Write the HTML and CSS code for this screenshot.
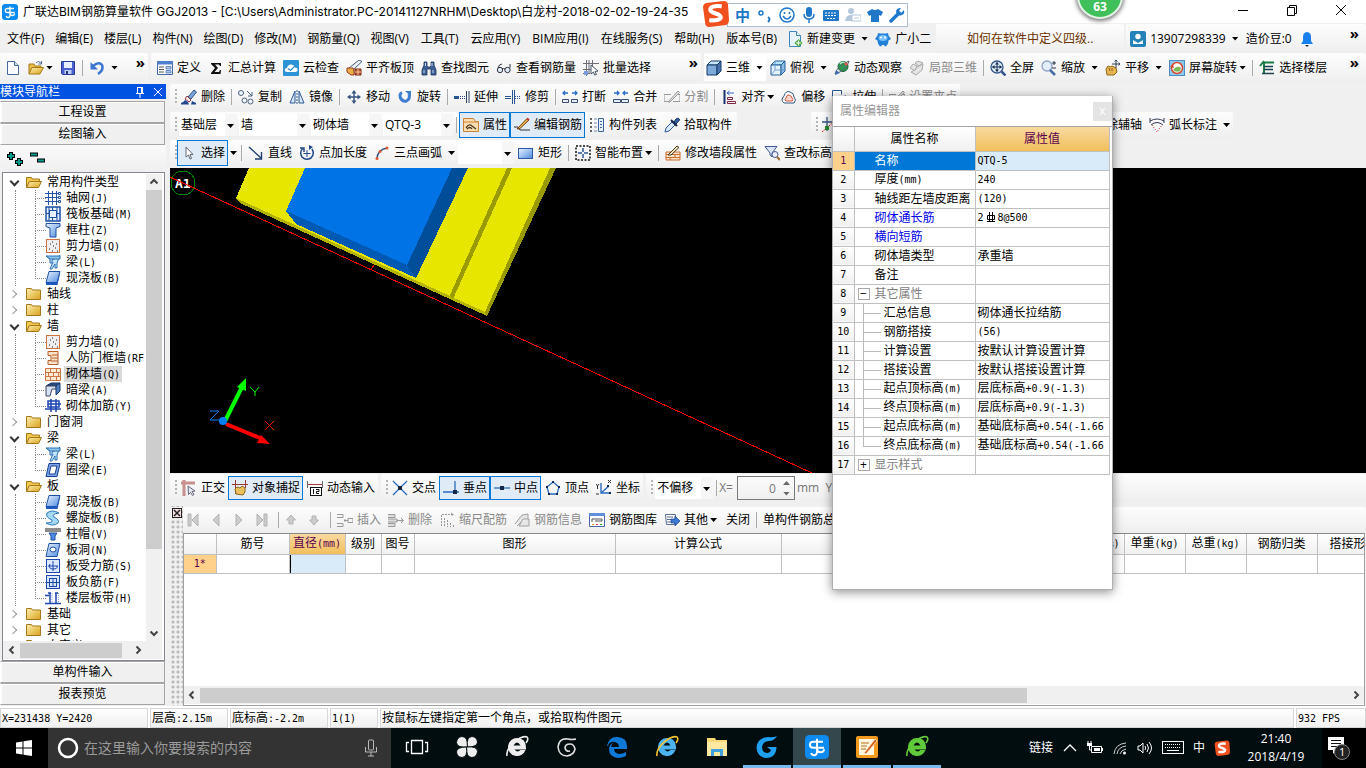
FILE: index.html
```html
<!DOCTYPE html>
<html lang="zh">
<head>
    <meta charset="UTF-8">
    <meta name="viewport" content="width=device-width, initial-scale=1.0">
    <title>广联达BIM钢筋算量软件 GGJ2013</title>
    <link rel="stylesheet" href="styles.css">
</head>
<body>
    <!-- 图标库 -->
    <svg class="sprite" aria-hidden="true">
        <defs>
            <linearGradient id="g-blue" x1="0" y1="0" x2="1" y2="1"><stop offset="0" stop-color="#eaf4ff"/><stop offset="1" stop-color="#4f8be0"/></linearGradient>
            <linearGradient id="g-gold" x1="0" y1="0" x2="1" y2="1"><stop offset="0" stop-color="#fff0b0"/><stop offset="1" stop-color="#d9a21c"/></linearGradient>
        </defs>
        <symbol id="app" viewBox="0 0 16 16"><rect width="16" height="16" rx="3" fill="#0d8bf0"/><path d="M8 2.500V11q0 2.500-2 2.500-1.500 0-1.800-1.500M12 4.500H5.500q-2.200 0-2.200 2t2.200 2h7.200M8 8.500q0 3 2.500 3 2 0 2.200-2" fill="none" stroke="#fff" stroke-width="1.300"/></symbol>
        <symbol id="new" viewBox="0 0 16 16"><path d="M2.500 1.500h7l4 4v9h-11z" fill="#fff" stroke="#456a9a"/><path d="M9.500 1.500v4h4" fill="#cfe0f4" stroke="#456a9a"/></symbol>
        <symbol id="open" viewBox="0 0 16 16"><path d="M1 14V4h5l1 2h6v2" fill="#e9bd4a" stroke="#a87b18"/><path d="M1 14l3-6.500h11.500L12 14z" fill="url(#g-gold)" stroke="#a87b18"/><path d="M8 3q3-3 5 .5M13.500 1v3h-3" fill="none" stroke="#506a90"/></symbol>
        <symbol id="save" viewBox="0 0 16 16"><path d="M1.500 1.500h13v13h-12l-1-1z" fill="#4a62d0" stroke="#2b3c98"/><path d="M4 2h8v6H4z" fill="#e8eefc"/><path d="M4.500 10h7v4h-7z" fill="#c2cdf2"/><path d="M6 11h2v3H6z" fill="#24357f"/></symbol>
        <symbol id="undo" viewBox="0 0 16 16"><path d="M4 6q6-5 9-1 2 5-4 9" fill="none" stroke="#3c76d0" stroke-width="2.500"/><path d="M1.500 2v7.500H9z" fill="#3c76d0"/></symbol>
        <symbol id="define" viewBox="0 0 16 16"><path d="M.5 1.500h15v13H.5z" fill="#fff" stroke="#4468a8"/><path d="M0 1h16v3.500H0z" fill="#4e7fd0"/><path d="M2 7h5M2 9.500h5M2 12h5" stroke="#555"/><path d="M9 6.500h5v2.500H9zM9 10.500h5v2.500H9z" fill="#a9c4f0" stroke="#4468a8" stroke-width=".7"/></symbol>
        <symbol id="sum" viewBox="0 0 16 16"><path d="M3 3h10v3h-1l-1-1.500H7L10 8l-3.500 4H11l1-2h1l-.5 4H3v-1l4-5-4-4z" fill="#111"/></symbol>
        <symbol id="cloud" viewBox="0 0 16 16"><rect width="16" height="16" rx="1" fill="#2c93d6"/><path d="M4 12q-3-.5-2-3 1-1.500 2-1 1-4 4.500-3.500Q11.500 5 12 7.500q3 0 2.500 3Q14 12 12 12z" fill="#fff"/><path d="M5 8.500l2.500 2L12 6" fill="none" stroke="#2c93d6" stroke-width="1.300"/></symbol>
        <symbol id="flat" viewBox="0 0 16 16"><path d="M3 8L13 0l3 1.500L7 10z" fill="#e8eef8" stroke="#4b5a78"/><path d="M1 8h6l1 3v4H5L1 12z" fill="#e9b04a" stroke="#9a3a16"/><path d="M9 9h6v6H9z" fill="#b8532c" stroke="#7c2b12"/><path d="M9 12h6M12 9v6" stroke="#ffe0c0" stroke-width=".8"/></symbol>
        <symbol id="find" viewBox="0 0 16 16"><path d="M3 2h3v4l1 1h2l1-1V2h3v3l2 5v5h-5V9H6v6H1v-5l2-5z" fill="#3c5f96" stroke="#1e355c" stroke-width=".8"/><path d="M3 10v3M12 10v3M4.500 3v3M11 3v3" stroke="#c5d8f4"/></symbol>
        <symbol id="glass" viewBox="0 0 16 16"><circle cx="4" cy="10" r="2.700" fill="#dfe8f4" stroke="#334"/><circle cx="11.500" cy="10" r="2.700" fill="#dfe8f4" stroke="#334"/><path d="M6 9q1.500-1 3 0M2 8q1-4 4-4M14 8V4" fill="none" stroke="#334"/></symbol>
        <symbol id="batch" viewBox="0 0 16 16"><path d="M3.500 0v16M9.500 0v9M0 3.500h16M0 9.500h9M0 13.500h7M6 0v14" stroke="#6d6d78" fill="none"/><path d="M1 11h4v4H1z" fill="#7c9ae0"/><path d="M8 5l7 6-3 .5 1.500 3-2 .5-1-3-2.500 2z" fill="#fff" stroke="#456"/></symbol>
        <symbol id="cube" viewBox="0 0 16 16"><path d="M1 5l4-4h10l-4 4z" fill="#c8e2f8" stroke="#143a66"/><path d="M1 5h10v10H1z" fill="#7eaadb" stroke="#143a66"/><path d="M11 5l4-4v10l-4 4z" fill="#4672ad" stroke="#143a66"/></symbol>
        <symbol id="cube2" viewBox="0 0 16 16"><path d="M1 5l4-4h10l-4 4z" fill="#b9e3fb" stroke="#245c96"/><path d="M1 5h10v10H1z" fill="#e4f2fd" stroke="#245c96"/><path d="M11 5l4-4v10l-4 4z" fill="#8ebee8" stroke="#245c96"/><path d="M5 1v9l-4 5M5 10h10" fill="none" stroke="#5f8fc2" stroke-width=".8"/></symbol>
        <symbol id="orbit" viewBox="0 0 16 16"><circle cx="9" cy="6.500" r="5" fill="#2b9a52" stroke="#145c30"/><path d="M6 4q2-3 5-1" stroke="#b8efc8" fill="none" stroke-width="1.500"/><path d="M1 14Q3 6 15 1 13 10 1 14z" fill="none" stroke="#56606c"/><path d="M1 15l1-5 4 3z" fill="#3f6cb0"/><circle cx="12" cy="4" r="1.500" fill="#e54"/></symbol>
        <symbol id="part" viewBox="0 0 16 16"><g fill="#e4e4e4" stroke="#a8a8a8"><path d="M1 8l3-4 4 2-2 5z"/><path d="M6 3l3-2 5 2-4 3z"/><path d="M8 7l6-3-1 6-6 5-5-3 4-2z"/></g></symbol>
        <symbol id="full" viewBox="0 0 16 16"><circle cx="7" cy="7" r="6" fill="#e3eefb" stroke="#35558c" stroke-width="1.300"/><path d="M11.500 11.500l4 4" stroke="#35558c" stroke-width="2.500"/><path d="M7 2.500v9M2.500 7h9" stroke="#152c58"/><path d="M7 2L5 4.500h4zM7 12l2-2.500H5zM2 7l2.500 2V5zM12 7L9.500 5v4z" fill="#152c58"/></symbol>
        <symbol id="zoom" viewBox="0 0 16 16"><circle cx="6" cy="6" r="5" fill="#e3eefb" stroke="#8fa3c4" stroke-width="1.300"/><path d="M9 10l5 5" stroke="#496ca5" stroke-width="2.500"/><path d="M13 1v4M11 3h4M11 8h4" stroke="#234"/></symbol>
        <symbol id="pan" viewBox="0 0 16 16"><path d="M2 15l-1-6 2-3 2 1 2-1 2 1 2 1 1 4-3 3z" fill="#e7b550" stroke="#8e671c"/><path d="M4 8l1 3M7 8v3" stroke="#8e671c"/><path d="M11 0v8M7 4h8M9.500 1.500L11 0l1.500 1.500M13.500 2.500L15 4l-1.500 1.500" fill="none" stroke="#345"/></symbol>
        <symbol id="rotscr" viewBox="0 0 16 16"><rect x=".5" y=".5" width="15" height="15" fill="#8ec8ef" stroke="#4c8fc4"/><circle cx="8" cy="8" r="5.500" fill="#fff" stroke="#d74a30" stroke-width="1.500"/><path d="M4 10q4-6 8-2l-1 3q-4 2-7-1z" fill="#7fb858"/><path d="M1 7l3-3 1 4z" fill="#d74a30"/></symbol>
        <symbol id="floors" viewBox="0 0 16 16"><path d="M1 6l4-5M5 2.500h10M5 2v12" fill="none" stroke="#1a7c46" stroke-width="2"/><path d="M5 6.500h9M5 9.500h9M3 13.500h12" stroke="#1d4350" stroke-width="1.500"/></symbol>
        <symbol id="newchg" viewBox="0 0 16 16"><path d="M2.500.5h7l4 4v11h-11z" fill="#e6f3fd" stroke="#3f86bb"/><path d="M9.500.5v4h4" fill="#fff" stroke="#3f86bb"/><path d="M11.500 8l4 4-4 4-4-4z" fill="#3da52f"/><path d="M11.500 9.500v5M9 12h5" stroke="#fff" stroke-width="1.200"/></symbol>
        <symbol id="robot" viewBox="0 0 16 16"><path d="M3 2l2 .5h6l2-.5.500 2.500L16 8l-2.500 1.500Q13 15 10 15.500L9 14H7l-1 1.500Q3 15 2.500 9.500L0 8l2.500-3.500z" fill="#2181d8"/><ellipse cx="8" cy="7" rx="4.500" ry="3" fill="#78c0f6"/><circle cx="6" cy="6.500" r="1" fill="#fff"/><circle cx="10" cy="6.500" r="1" fill="#fff"/></symbol>
        <symbol id="user" viewBox="0 0 16 16"><rect width="16" height="16" rx="2" fill="#2482b8"/><circle cx="8" cy="5.500" r="2.700" fill="#fff"/><path d="M3 13V9l5 3 5-3v4z" fill="#fff"/></symbol>
        <symbol id="bell" viewBox="0 0 16 16"><path d="M8 1q4 .5 4 5v4l2 3H2l2-3V6q0-4.500 4-5z" fill="#1680ee"/><path d="M6 14h4l-2 2z" fill="#234"/></symbol>
        <symbol id="brush" viewBox="0 0 16 16"><path d="M7 8l6-7 2.500 2L10 10z" fill="#7ba6dc" stroke="#35507c"/><path d="M6 7l4 4-2 2-4-3z" fill="#f4e8e0" stroke="#8c3a50"/><path d="M0 15.500V14q3-1 4-3l3 2 1 2.500zM11 12l4 2v1.500h-5z" fill="#20488c"/></symbol>
        <symbol id="copy" viewBox="0 0 16 16"><g fill="#f2f6fb" stroke="#4a6180"><circle cx="3" cy="4" r="2.500"/><circle cx="6.500" cy="11.500" r="2.500"/><circle cx="12.500" cy="12.500" r="2.500"/></g><path d="M9 2l5 5M14 3v4h-4" fill="none" stroke="#4a6180"/></symbol>
        <symbol id="mirror" viewBox="0 0 16 16"><path d="M6 2v12H1zM10 2v12h5z" fill="#d8e7f8" stroke="#2c5a9c"/><path d="M8 1v14" stroke="#2c5a9c" stroke-dasharray="2 1"/></symbol>
        <symbol id="move" viewBox="0 0 16 16"><path d="M8 3v10M3 8h10" stroke="#35557e" stroke-width="1.400"/><path d="M8 1L5.500 4.500h5zM8 15l2.500-3.500h-5zM1 8l3.500 2.500v-5zM15 8l-3.500-2.500v5z" fill="#35557e"/></symbol>
        <symbol id="rotate" viewBox="0 0 16 16"><path d="M5 3.500Q2 5 3.500 9q2 4 6 3 4-2 2.500-7" fill="none" stroke="#3f7dd2" stroke-width="3"/><path d="M8 2h6v5.500z" fill="#3f7dd2"/></symbol>
        <symbol id="extend" viewBox="0 0 16 16"><path d="M0 7h5v3H0z" fill="#2a5794"/><path d="M6 7.500h6M6 9.500h6" stroke="#2a5794" stroke-dasharray="1 1"/><path d="M12.500 2v12M15 2v12" stroke="#2a3f60"/></symbol>
        <symbol id="trim" viewBox="0 0 16 16"><path d="M0 7.500h6M0 9.500h6" stroke="#2a5794"/><path d="M7.500 1v14M9.500 1v14" stroke="#2a5794"/><path d="M10 7.500h6M10 9.500h6" stroke="#2a5794" stroke-dasharray="1 1"/></symbol>
        <symbol id="break" viewBox="0 0 16 16"><path d="M6 4H1M3 2L1 4l2 2M10 4h5M13 2l2 2-2 2" fill="none" stroke="#2b6cc8" stroke-width="1.300"/><path d="M.5 10.500h6v3h-6zM9.500 10.500h6v3h-6z" fill="#e7eef8" stroke="#3a4f70"/></symbol>
        <symbol id="merge" viewBox="0 0 16 16"><path d="M1 4h5M4 2l2 2-2 2M15 4h-5M12 2l-2 2 2 2" fill="none" stroke="#2b6cc8" stroke-width="1.300"/><path d="M.5 10.500h7v3h-7zM8.500 10.500h7v3h-7z" fill="#e7eef8" stroke="#3a4f70"/></symbol>
        <symbol id="split" viewBox="0 0 16 16"><path d="M0 5.500h7M0 5.500v7h5M9 12.500h7v-7h-4" stroke="#999" fill="none"/><path d="M4 13L14 2l1.500 1.500L6 13z" fill="#ddd" stroke="#999"/></symbol>
        <symbol id="align" viewBox="0 0 16 16"><path d="M3.500 1v14" stroke="#17316c" stroke-width="2"/><path d="M6 4h7M8.500 2L6 4l2.500 2" fill="none" stroke="#2f6bc0"/><path d="M6.500 8.500h5v2h-5zM6.500 12.500h8v2h-8z" fill="#fff" stroke="#7a2340"/></symbol>
        <symbol id="offset" viewBox="0 0 16 16"><path d="M3 14Q-1 11 3 7q2-6 6-4 4 1 4 5 3 3 0 6z" fill="#fff" stroke="#35557e"/><path d="M5 12q-2-1 0-3 1-4 3-3 3 1 3 3 2 2 0 3z" fill="#fbd6cc" stroke="#d0523c"/></symbol>
        <symbol id="stretch" viewBox="0 0 16 16"><path d="M.5 1.500h9v4" fill="#fff" stroke="#2a5794"/><path d="M.5 1.500v12h7" fill="none" stroke="#2a5794"/><path d="M8 9l6-3-2 6z" fill="#2a5794"/></symbol>
        <symbol id="props" viewBox="0 0 16 16"><path d="M.5 1.500h10l2 3h3v10H.5z" fill="#f9ddb0" stroke="#cb8230"/><path d="M1 5h14" stroke="#cb8230"/><path d="M3 11q3-5 6-2l4 3M4 12q3-3 5 0" stroke="#4c3a20" stroke-width="1.300" fill="none"/></symbol>
        <symbol id="editbar" viewBox="0 0 16 16"><path d="M0 10h4l2 3h10" fill="none" stroke="#333"/><path d="M3 12L13 1.500l2 1.500L6 11.500z" fill="#e8b24e" stroke="#754318"/><path d="M13 1.500l2 1.500" stroke="#c8302c" stroke-width="2"/></symbol>
        <symbol id="list" viewBox="0 0 16 16"><path d="M1 2h2M1 6h2M1 10h2M1 14h2" stroke="#333" stroke-width="1.500"/><path d="M5 2h3M5 6h3M5 10h3M5 14h3" stroke="#7788aa"/><path d="M9.500 1.500h5v13h-5z" fill="#e6effc" stroke="#3c62a2"/><path d="M11 4.500h2M11 7.500h2M11 10.500h2" stroke="#3c62a2"/></symbol>
        <symbol id="picker" viewBox="0 0 16 16"><path d="M1 15l1-4 6-6 3 3-6 6z" fill="#dbe9fa" stroke="#2b5a9c"/><path d="M7 3l6 6" stroke="#16284c" stroke-width="2"/><path d="M10 5l2-3q3-2 3.500 1L12 7z" fill="#2f62ac" stroke="#16284c"/></symbol>
        <symbol id="axis" viewBox="0 0 16 16"><path d="M0 5h16M5 0v14" stroke="#35557e" stroke-width="1.300"/><path d="M0 15L14 3" stroke="#e02020" stroke-dasharray="2 1"/><path d="M3 9h4v4H3z" fill="#2a8a2a"/></symbol>
        <symbol id="arcdim" viewBox="0 0 16 16"><path d="M1 4q7-4 14 0M1 1v5M15 1v5M2 8q6-5 12 0" fill="none" stroke="#333a55"/><path d="M3 8l5 7 5-7" fill="none" stroke="#d33" stroke-dasharray="1 1.500"/></symbol>
        <symbol id="cursor" viewBox="0 0 16 16"><path d="M5 2v10l2.500-2L9 14l1.500-.5L9 9.500h3z" fill="#fff" stroke="#667"/></symbol>
        <symbol id="line" viewBox="0 0 16 16"><path d="M1 2l12 11M13.500 7v7H7" fill="none" stroke="#1f3f74" stroke-width="1.400"/></symbol>
        <symbol id="ptlen" viewBox="0 0 16 16"><path d="M4 3Q0 7 3 12q4 4 9 1 4-4 1-9M1 3h4v4" fill="none" stroke="#234b8a" stroke-width="1.500"/><path d="M8 5v7M4.500 8.500h7" stroke="#234b8a"/><path d="M10 5V0l4 2z" fill="#234b8a"/></symbol>
        <symbol id="arc" viewBox="0 0 16 16"><path d="M3 14Q3 5 13 3" fill="none" stroke="#314e80" stroke-width="1.300"/><g fill="#e0552f"><circle cx="3" cy="13.500" r="1.500"/><circle cx="6" cy="6.500" r="1.500"/><circle cx="13" cy="3" r="1.500"/></g></symbol>
        <symbol id="rect" viewBox="0 0 16 16"><rect x=".5" y="3.500" width="14" height="10" fill="url(#g-blue)" stroke="#2b59a8"/></symbol>
        <symbol id="smart" viewBox="0 0 16 16"><rect x="1" y="1" width="14" height="14" fill="none" stroke="#111" stroke-width="1.500" stroke-dasharray="2 1.500"/><path d="M8 3v4M8 9v4M3 8h4M9 8h4" stroke="#2d5792" stroke-width="1.500"/></symbol>
        <symbol id="wallprop" viewBox="0 0 16 16"><path d="M1 7h14v8H1z" fill="#fde4cc" stroke="#ce6c2c"/><path d="M1 9.500h14M1 12.500h14M5 7v3M10 9v4M5 12v3" stroke="#ce6c2c"/><path d="M3 10L12 1l2 1.500L6 10z" fill="#f2e2b0" stroke="#463828"/></symbol>
        <symbol id="elev" viewBox="0 0 16 16"><path d="M1 1.500h12L8 8v4L6 10V8z" fill="#dae6f7" stroke="#425c92"/><circle cx="11" cy="9.500" r="3" fill="#eef" stroke="#425c92"/><path d="M13 12l3 3" stroke="#a06a28" stroke-width="2"/></symbol>
        <symbol id="ortho" viewBox="0 0 16 16"><path d="M0 3h14M3 0v16" stroke="#c98f8f" stroke-width="3"/><path d="M7 6l7 5-3 .5 2 3-1.500 1-2-3-2 2z" fill="#e2e8f0" stroke="#667"/></symbol>
        <symbol id="osnap" viewBox="0 0 16 16"><path d="M0 4.500h16M3.500 0v14M13.500 0v8" stroke="#9a3838"/><path d="M4 14l-1-5 2-2 3 1 2-2 3 2v4l-2 3z" fill="#eac05c" stroke="#8e671c"/></symbol>
        <symbol id="dyn" viewBox="0 0 16 16"><path d="M0 4.500h16" stroke="#a33c3c"/><path d="M.5 1v7M15.500 1v7" stroke="#666"/><rect x="3.500" y="7.500" width="11" height="8" fill="#fff" stroke="#111"/><path d="M6.500 9v5M9 9.500h3v2H9.500v2H12" fill="none" stroke="#111"/></symbol>
        <symbol id="cross" viewBox="0 0 16 16"><path d="M1 1l14 14M15 1L1 15" stroke="#2d6cc0" stroke-width="1.300"/><path d="M6 6h4v4H6z" fill="#14284c"/></symbol>
        <symbol id="perp" viewBox="0 0 16 16"><path d="M12 1v11M0 12h16" stroke="#2d6cc0" stroke-width="1.300"/><path d="M10 10h4v4h-4z" fill="#14284c"/></symbol>
        <symbol id="mid" viewBox="0 0 16 16"><path d="M0 8h16" stroke="#2d6cc0" stroke-width="1.300"/><path d="M6 6h4v4H6z" fill="#14284c"/></symbol>
        <symbol id="vertex" viewBox="0 0 16 16"><path d="M8 2l6 5-2 7H4L2 7z" fill="none" stroke="#2d6cc0" stroke-width="1.300"/><path d="M7 1h2v2H7zM1 6h2v2H1zM13 6h2v2h-2zM3 13h2v2H3zM11 13h2v2h-2z" fill="#14284c"/></symbol>
        <symbol id="coord" viewBox="0 0 16 16"><path d="M5 3v10h10M5 13l8-7" fill="none" stroke="#2d6cc0" stroke-width="1.400"/><path d="M0 4l1.500 2L3 4M1.500 6v3M0 14h3M12 0l3 3M15 0l-3 3" stroke="#333" fill="none"/><path d="M11 5h2v2h-2zM13 12h2v2h-2z" fill="#14284c"/></symbol>
        <symbol id="first" viewBox="0 0 16 16"><path d="M3 2h3v12H3zM13 2L7 8l6 6z" fill="#ccc" stroke="#b4b4b4"/></symbol>
        <symbol id="prev" viewBox="0 0 16 16"><path d="M11 2L5 8l6 6z" fill="#ccc" stroke="#b4b4b4"/></symbol>
        <symbol id="next" viewBox="0 0 16 16"><path d="M5 2l6 6-6 6z" fill="#ccc" stroke="#b4b4b4"/></symbol>
        <symbol id="last" viewBox="0 0 16 16"><path d="M10 2h3v12h-3zM3 2l6 6-6 6z" fill="#ccc" stroke="#b4b4b4"/></symbol>
        <symbol id="up" viewBox="0 0 16 16"><path d="M8 3l4.500 5H10v4H6V8H3.500z" fill="#ccc" stroke="#b4b4b4"/></symbol>
        <symbol id="down" viewBox="0 0 16 16"><path d="M8 13L3.500 8H6V4h4v4h2.500z" fill="#ccc" stroke="#b4b4b4"/></symbol>
        <symbol id="ins" viewBox="0 0 16 16"><path d="M0 2.500h6v3H0M0 14.500h6v-3H0M7 8.500h4M8 7v3M11 6.500h5v4h-5z" fill="none" stroke="#999"/></symbol>
        <symbol id="del" viewBox="0 0 16 16"><path d="M0 2.500h7v3H0M0 14.500h7v-3H0M0 7h9v3H0M9 8.500h6M13 6l2.500 2.500L13 11" fill="#ddd" stroke="#999"/></symbol>
        <symbol id="scale" viewBox="0 0 16 16"><path d="M3 2.500h12M12 1l2.500 1.500L12 4M2.500 3v12M5.500 6v9M8.500 8v7M11.500 11v4M14.500 13v2" fill="none" stroke="#999" stroke-dasharray="2 1"/></symbol>
        <symbol id="info" viewBox="0 0 16 16"><path d="M1 12L8 3l6-1v5M5 14h10V7H9zM3 14l4-4" fill="#e6e6e6" stroke="#a0a0a0"/></symbol>
        <symbol id="lib" viewBox="0 0 16 16"><path d="M.5 1.500h15v13H.5z" fill="#fff" stroke="#4468a8"/><path d="M0 1h16v3H0z" fill="#5f8fd8"/><path d="M3 10V7h10v2H6" fill="none" stroke="#555"/><path d="M3 12.500h2" stroke="#e8a020"/><path d="M7 12.500h2" stroke="#d33"/><path d="M11 12.500h2" stroke="#2a2"/></symbol>
        <symbol id="other" viewBox="0 0 16 16"><path d="M1.500 2.500h10l-1 10H2.500z" fill="#fff" stroke="#5b6f92"/><path d="M3 5h6M3 7.500h4M3 10h4" stroke="#5b6f92"/><path d="M7 7h4V4l5 5-5 5v-3H7z" fill="#3b78d8" stroke="#1c468c" stroke-width=".7"/></symbol>
        <symbol id="fopen" viewBox="0 0 16 16"><path d="M.5 13.500v-10h5l1 1.500h7v2" fill="#f0c64c" stroke="#a47a1c"/><path d="M.5 13.500l3-6h12l-3 6z" fill="url(#g-gold)" stroke="#a47a1c"/></symbol>
        <symbol id="fclosed" viewBox="0 0 16 16"><path d="M.5 13.500v-11h5l1 1.500h8v9.500z" fill="url(#g-gold)" stroke="#a47a1c"/></symbol>
        <symbol id="t-grid" viewBox="0 0 16 16"><path d="M0 3.500h13M0 7.500h13M0 11.500h13M3.500 1v14M7.500 1v14M11.500 1v14" stroke="#2456a8" fill="none"/><path d="M13.500 2.500h2v2h-2zM13.500 6.500h2v2h-2zM13.500 10.500h2v2h-2z" fill="#fff" stroke="#2456a8"/></symbol>
        <symbol id="t-raft" viewBox="0 0 16 16"><rect x="1" y="1" width="14" height="14" fill="#e8f2ff" stroke="#1d4fa0" stroke-width="1.500"/><path d="M4.500 4.500h7v7h-7zM7.500 1v4M7.500 11v4M1 7.500h4M11 7.500h4M4 1v14M12 1v14" fill="none" stroke="#1d4fa0"/></symbol>
        <symbol id="t-col" viewBox="0 0 16 16"><path d="M1 1.500h14v3l-4 1.500v9H5V6L1 4.500z" fill="url(#g-blue)" stroke="#1f4fa2"/></symbol>
        <symbol id="t-wall" viewBox="0 0 16 16"><rect x="1.500" y="1.500" width="13" height="13" fill="#eee" stroke="#cf7440"/><path d="M4 11h1M7 13h1M10 10h1M8 8h1M11 6h1M5 6h1M7 4h1M12 13h1" stroke="#666" stroke-width="1.500"/></symbol>
        <symbol id="t-beam" viewBox="0 0 16 16"><path d="M1 2l4 3v4h2V6l6-3 2-2-3 8v5h-2v-4L7 15H5l3-7" fill="#c4e4fa" stroke="#2b70b4"/><path d="M1 2h14v3H5z" fill="#8ec6ee" stroke="#2b70b4"/></symbol>
        <symbol id="t-slab" viewBox="0 0 16 16"><path d="M4 1.500h11L12 12.500H1z" fill="url(#g-blue)" stroke="#1d4fa0"/><path d="M1 12.500h11l3-11v2L12.500 15H1z" fill="#1d58c0"/></symbol>
        <symbol id="t-door" viewBox="0 0 16 16"><path d="M3 1.500h10v13H3v-4h3v-5H3z" fill="#fce2c8" stroke="#b65f2c"/><path d="M7 5h6M7 8h6M6 11h7" stroke="#b65f2c"/></symbol>
        <symbol id="t-brick" viewBox="0 0 16 16"><path d="M.5 2.500h15v12H.5z" fill="#fdebd8" stroke="#cd7440"/><path d="M1 6.500h14M1 10.500h14M5.500 3v4M11.500 3v4M3.500 7v4M8.500 7v4M13.500 7v4M5.500 11v4M11.500 11v4" stroke="#cd7440"/></symbol>
        <symbol id="t-hid" viewBox="0 0 16 16"><path d="M1 4l5-3h9l-4 3z" fill="#264a80" stroke="#1a3766"/><path d="M1 4h10v3H7l-2 7H1z" fill="#d4e2f2" stroke="#446"/><path d="M11 4l4-3v8l-4 4z" fill="#4d7fc0" stroke="#1a3766"/></symbol>
        <symbol id="t-bar" viewBox="0 0 16 16"><path d="M3 3h11v6H3zM0 11h16M6 1v13M11 1v13M3 6h13" fill="none" stroke="#1c46b0" stroke-width="1.500"/></symbol>
        <symbol id="t-ring" viewBox="0 0 16 16"><path d="M4 1.500h11L12 14.500H1z" fill="#7aa5e8" stroke="#173f90"/><path d="M6 4h6l-2 8H4z" fill="#fff" stroke="#173f90"/></symbol>
        <symbol id="t-spiral" viewBox="0 0 16 16"><path d="M2 3q5-4 12 0-8 1-5 4 6 3 4 6-5 4-12 0 7 0 6-3-7-3-5-7z" fill="#a6d9f6" stroke="#2775b8"/></symbol>
        <symbol id="t-cap" viewBox="0 0 16 16"><path d="M0 2h16v4H0z" fill="#8c8c8c"/><path d="M4 7h8l-2 3v4H6v-4z" fill="#4f8be0" stroke="#1d4fa0"/></symbol>
        <symbol id="t-hole" viewBox="0 0 16 16"><path d="M4 1.500h11L12 14.500H1z" fill="url(#g-blue)" stroke="#1d4fa0"/><ellipse cx="8" cy="7.500" rx="3" ry="2.500" fill="#fff" stroke="#1d4fa0"/></symbol>
        <symbol id="t-force" viewBox="0 0 16 16"><rect x="1.500" y="1.500" width="13" height="13" fill="#dce9fc" stroke="#1c46b0"/><path d="M3 8h10M8 3v10M5 6q-2 5 3 5t4-3" fill="none" stroke="#1c46b0"/></symbol>
        <symbol id="t-neg" viewBox="0 0 16 16"><rect x="1.500" y="1.500" width="13" height="13" fill="#dce9fc" stroke="#1c46b0"/><path d="M4 4.500h8M8 4v8M2 8.500h12M4 12.500h8M4.500 4v9M11.500 4v9" fill="none" stroke="#1c46b0"/></symbol>
        <symbol id="t-strip" viewBox="0 0 16 16"><path d="M0 13.500h16M3 3h3M10 3h3M5 3v10M11 3v10M0 5.500h4" fill="none" stroke="#1c46b0" stroke-width="1.500"/><path d="M7 3v10M13.500 3v10" stroke="#7aa5e8" stroke-dasharray="1 1"/></symbol>
        <symbol id="sogou" viewBox="0 0 26 26"><path d="M4 3l17-2q3 0 4 3l1 15q0 4-3 5L7 26q-4 0-4-4L1 7q0-3 3-4z" fill="#f0501e"/><path d="M19 6Q8 5 8 9.500c0 4 10 3 10 7q0 3.500-11 3" fill="none" stroke="#fff" stroke-width="4"/></symbol>
        <symbol id="edge" viewBox="0 0 24 24"><path d="M2 11Q4 1 13 2q9 1 9 9v3H9q0 4 5 5 4 0 7-2v4q-4 2-8 2-9-1-9-9 0-4 5-7-3 2-3 5h8q0-4-4-5-6-1-7 4z" fill="#0f79d8"/></symbol>
        <symbol id="ie" viewBox="0 0 24 24"><path d="M12 3a9 9 0 1 0 8.500 12h-5q-3 3-6-.5h11.500Q21.500 3 12 3zM8.500 10.500q3.500-6 7 0z" fill="currentColor" fill-rule="evenodd"/><path d="M2 21Q1 15 8 8 17 0 22 2q2 2-1 6" fill="none" stroke="var(--ring, currentColor)" stroke-width="1.600"/></symbol>
    </svg>

    <!-- 标题栏 -->
    <header class="title-bar">
        <svg class="i"><use href="#app"/></svg>
        <h1>广联达BIM钢筋算量软件 GGJ2013 - [C:\Users\Administrator.PC-20141127NRHM\Desktop\白龙村-2018-02-02-19-24-35</h1>
        <div class="win-btns">
            <button aria-label="最小化"><svg class="i" viewBox="0 0 16 16"><path d="M3 8.500h10" stroke="#000"/></svg></button>
            <button aria-label="还原"><svg class="i" viewBox="0 0 16 16"><path d="M3.500 5.500h7v8h-7zM5.500 5V3.500h7v8H11" fill="none" stroke="#000"/></svg></button>
            <button aria-label="关闭"><svg class="i" viewBox="0 0 16 16"><path d="M3 3l10 10M13 3L3 13" stroke="#000"/></svg></button>
        </div>
    </header>

    <!-- 输入法悬浮条 -->
    <div class="ime-bar">
        <svg class="ime-logo"><use href="#sogou"/></svg>
        <b>中</b>
        <svg viewBox="0 0 16 16"><circle cx="4" cy="6" r="2" fill="none" stroke="#1f77c9" stroke-width="1.500"/><path d="M11 10q3 2 0 5" fill="none" stroke="#1f77c9" stroke-width="2"/></svg>
        <svg viewBox="0 0 16 16"><circle cx="8" cy="8" r="7" fill="none" stroke="#1f77c9" stroke-width="1.500"/><path d="M4 9q4 6 8 0M5.500 5v2M10.500 5v2" fill="none" stroke="#1f77c9" stroke-width="1.500"/></svg>
        <svg viewBox="0 0 16 16"><rect x="5" y="0" width="6" height="10" rx="3" fill="#1f77c9"/><path d="M3 7q0 5 5 5t5-5M8 12v4" fill="none" stroke="#1f77c9" stroke-width="1.500"/></svg>
        <svg viewBox="0 0 16 16"><rect x="0" y="3" width="16" height="11" rx="1" fill="#1f77c9"/><path d="M2 6h12M2 8.500h12M4 11.500h8" stroke="#fff" stroke-dasharray="2 1"/></svg>
        <svg viewBox="0 0 16 16"><circle cx="6" cy="4" r="3" fill="#b4c8dc"/><path d="M0 14q1-7 7-6v6z" fill="#b4c8dc"/><rect x="7" y="8" width="9" height="6" fill="#fff" stroke="#b4c8dc"/><path d="M9 11h5" stroke="#b4c8dc"/></svg>
        <svg viewBox="0 0 16 16"><path d="M5 2q3 2 6 0l5 3-2 4-2-1v7H4V8L2 9 0 5z" fill="#1f77c9"/></svg>
        <svg viewBox="0 0 16 16"><path d="M2 14l8-8" stroke="#1f77c9" stroke-width="3.500" stroke-linecap="round"/><path d="M15 3l-3 3-2-2 2-3q-5 0-5 4 2 5 6 3 3-1 2-5z" fill="#1f77c9"/></svg>
    </div>
    <div class="speed-ball">63</div>

    <!-- 菜单栏 -->
    <div class="menu-row">
        <nav class="menu">
            <a href="#">文件(F)</a><a href="#">编辑(E)</a><a href="#">楼层(L)</a><a href="#">构件(N)</a><a href="#">绘图(D)</a><a href="#">修改(M)</a><a href="#">钢筋量(Q)</a><a href="#">视图(V)</a><a href="#">工具(T)</a><a href="#">云应用(Y)</a><a href="#">BIM应用(I)</a><a href="#">在线服务(S)</a><a href="#">帮助(H)</a><a href="#">版本号(B)</a>
        </nav>
        <button class="tb"><svg class="i"><use href="#newchg"/></svg>新建变更<i class="arr wide"></i></button>
        <button class="tb"><svg class="i"><use href="#robot"/></svg>广小二</button>
        <div class="bar tip"><a href="#">如何在软件中定义四级..</a></div>
        <div class="bar grow">
            <button class="tb"><svg class="i"><use href="#user"/></svg>13907298339<i class="arr wide"></i></button>
            <button class="tb">造价豆:0</button>
            <button class="tb" aria-label="消息"><svg class="i"><use href="#bell"/></svg></button>
            <span class="more">»</span>
        </div>
    </div>

    <!-- 主工具栏 -->
    <div class="tool-row main-tools">
        <div class="bar bar-file">
            <button class="tb" aria-label="新建"><svg class="i"><use href="#new"/></svg></button>
            <button class="tb" aria-label="打开"><svg class="i"><use href="#open"/></svg><i class="arr"></i></button>
            <button class="tb" aria-label="保存"><svg class="i"><use href="#save"/></svg></button>
            <span class="sep"></span>
            <button class="tb" aria-label="撤销"><svg class="i"><use href="#undo"/></svg><i class="arr wide"></i></button>
            <span class="more">»</span>
        </div>
        <div class="bar bar-calc">
            <button class="tb"><svg class="i"><use href="#define"/></svg>定义</button>
            <button class="tb"><svg class="i"><use href="#sum"/></svg>汇总计算</button>
            <button class="tb"><svg class="i"><use href="#cloud"/></svg>云检查</button>
            <button class="tb"><svg class="i"><use href="#flat"/></svg>平齐板顶</button>
            <button class="tb"><svg class="i"><use href="#find"/></svg>查找图元</button>
            <button class="tb"><svg class="i"><use href="#glass"/></svg>查看钢筋量</button>
            <button class="tb"><svg class="i"><use href="#batch"/></svg>批量选择</button>
            <span class="more">»</span>
        </div>
        <div class="bar grow">
            <button class="tb drop"><svg class="i"><use href="#cube"/></svg>三维<i class="arr wide"></i></button>
            <button class="tb"><svg class="i"><use href="#cube2"/></svg>俯视<i class="arr wide"></i></button>
            <button class="tb"><svg class="i"><use href="#orbit"/></svg>动态观察</button>
            <button class="tb" disabled><svg class="i"><use href="#part"/></svg>局部三维</button>
            <span class="sep"></span>
            <button class="tb"><svg class="i"><use href="#full"/></svg>全屏</button>
            <button class="tb"><svg class="i"><use href="#zoom"/></svg>缩放<i class="arr wide"></i></button>
            <button class="tb"><svg class="i"><use href="#pan"/></svg>平移<i class="arr wide"></i></button>
            <button class="tb"><svg class="i"><use href="#rotscr"/></svg>屏幕旋转<i class="arr"></i></button>
            <span class="sep"></span>
            <button class="tb"><svg class="i"><use href="#floors"/></svg>选择楼层</button>
            <span class="more">»</span>
        </div>
    </div>

    <div class="workspace">
        <!-- 模块导航栏 -->
        <aside class="sidebar">
            <div class="side-title"><span>模块导航栏</span>
                <svg class="i" viewBox="0 0 16 16"><path d="M5.500 3v6M10.500 3v6M5 3.500h6M4 9.500h8M8 10v4M9.500 3v6" stroke="#fff" fill="none"/></svg>
                <svg class="i" viewBox="0 0 16 16"><path d="M4 4l8 8M12 4l-8 8" stroke="#fff"/></svg>
            </div>
            <button class="side-btn">工程设置</button>
            <button class="side-btn">绘图输入</button>
            <div class="side-tools">
                <svg width="40" height="18" viewBox="0 0 40 18"><path d="M1 6h8M5 2v8M9 12h8M13 8v8M24 4.500h8M31 10.500h8" stroke="#000" stroke-width="4"/><path d="M2 6h6M5 3v6M10 12h6M13 9v6M25 4.500h6M32 10.500h6" stroke="#009c8c" stroke-width="2"/></svg>
            </div>
            <div class="tree-box">
                <div class="tree-body">
                    <ul class="tree">
                        <li class="open"><span class="node"><svg class="i"><use href="#fopen"/></svg>常用构件类型</span>
                            <ul>
                                <li><svg class="i"><use href="#t-grid"/></svg><span>轴网<em>(J)</em></span></li>
                                <li><svg class="i"><use href="#t-raft"/></svg><span>筏板基础<em>(M)</em></span></li>
                                <li><svg class="i"><use href="#t-col"/></svg><span>框柱<em>(Z)</em></span></li>
                                <li><svg class="i"><use href="#t-wall"/></svg><span>剪力墙<em>(Q)</em></span></li>
                                <li><svg class="i"><use href="#t-beam"/></svg><span>梁<em>(L)</em></span></li>
                                <li><svg class="i"><use href="#t-slab"/></svg><span>现浇板<em>(B)</em></span></li>
                            </ul>
                        </li>
                        <li><span class="node"><svg class="i"><use href="#fclosed"/></svg>轴线</span></li>
                        <li><span class="node"><svg class="i"><use href="#fclosed"/></svg>柱</span></li>
                        <li class="open"><span class="node"><svg class="i"><use href="#fopen"/></svg>墙</span>
                            <ul>
                                <li><svg class="i"><use href="#t-wall"/></svg><span>剪力墙<em>(Q)</em></span></li>
                                <li><svg class="i"><use href="#t-door"/></svg><span>人防门框墙<em>(RF</em></span></li>
                                <li class="selected"><svg class="i"><use href="#t-brick"/></svg><span>砌体墙<em>(Q)</em></span></li>
                                <li><svg class="i"><use href="#t-hid"/></svg><span>暗梁<em>(A)</em></span></li>
                                <li><svg class="i"><use href="#t-bar"/></svg><span>砌体加筋<em>(Y)</em></span></li>
                            </ul>
                        </li>
                        <li><span class="node"><svg class="i"><use href="#fclosed"/></svg>门窗洞</span></li>
                        <li class="open"><span class="node"><svg class="i"><use href="#fopen"/></svg>梁</span>
                            <ul>
                                <li><svg class="i"><use href="#t-beam"/></svg><span>梁<em>(L)</em></span></li>
                                <li><svg class="i"><use href="#t-ring"/></svg><span>圈梁<em>(E)</em></span></li>
                            </ul>
                        </li>
                        <li class="open"><span class="node"><svg class="i"><use href="#fopen"/></svg>板</span>
                            <ul>
                                <li><svg class="i"><use href="#t-slab"/></svg><span>现浇板<em>(B)</em></span></li>
                                <li><svg class="i"><use href="#t-spiral"/></svg><span>螺旋板<em>(B)</em></span></li>
                                <li><svg class="i"><use href="#t-cap"/></svg><span>柱帽<em>(V)</em></span></li>
                                <li><svg class="i"><use href="#t-hole"/></svg><span>板洞<em>(N)</em></span></li>
                                <li><svg class="i"><use href="#t-force"/></svg><span>板受力筋<em>(S)</em></span></li>
                                <li><svg class="i"><use href="#t-neg"/></svg><span>板负筋<em>(F)</em></span></li>
                                <li><svg class="i"><use href="#t-strip"/></svg><span>楼层板带<em>(H)</em></span></li>
                            </ul>
                        </li>
                        <li><span class="node"><svg class="i"><use href="#fclosed"/></svg>基础</span></li>
                        <li><span class="node"><svg class="i"><use href="#fclosed"/></svg>其它</span></li>
                        <li><span class="node"><svg class="i"><use href="#fclosed"/></svg>自定义</span></li>
                    </ul>
                    <div class="vscroll">
                        <svg viewBox="0 0 16 16"><path d="M4.500 9.500L8 6l3.500 3.500" fill="none" stroke="#444" stroke-width="2"/></svg>
                        <span class="thumb"></span>
                        <svg viewBox="0 0 16 16"><path d="M4.500 6.500L8 10l3.500-3.500" fill="none" stroke="#444" stroke-width="2"/></svg>
                    </div>
                </div>
                <div class="hscroll">
                    <svg viewBox="0 0 16 16"><path d="M9.500 4.500L6 8l3.500 3.500" fill="none" stroke="#444" stroke-width="2"/></svg>
                    <span class="thumb"></span>
                    <svg viewBox="0 0 16 16"><path d="M6.500 4.500L10 8l-3.500 3.500" fill="none" stroke="#444" stroke-width="2"/></svg>
                </div>
            </div>
            <button class="side-btn">单构件输入</button>
            <button class="side-btn">报表预览</button>
        </aside>

        <main class="content">
            <div class="tool-row">
                <div class="bar">
                    <span class="grip"></span>
                    <button class="tb"><svg class="i"><use href="#brush"/></svg>删除</button>
                    <span class="sep"></span>
                    <button class="tb"><svg class="i"><use href="#copy"/></svg>复制</button>
                    <button class="tb"><svg class="i"><use href="#mirror"/></svg>镜像</button>
                    <span class="sep"></span>
                    <button class="tb"><svg class="i"><use href="#move"/></svg>移动</button>
                    <button class="tb"><svg class="i"><use href="#rotate"/></svg>旋转</button>
                    <span class="sep"></span>
                    <button class="tb"><svg class="i"><use href="#extend"/></svg>延伸</button>
                    <button class="tb"><svg class="i"><use href="#trim"/></svg>修剪</button>
                    <span class="sep"></span>
                    <button class="tb"><svg class="i"><use href="#break"/></svg>打断</button>
                    <button class="tb"><svg class="i"><use href="#merge"/></svg>合并</button>
                    <button class="tb" disabled><svg class="i"><use href="#split"/></svg>分割</button>
                    <span class="sep"></span>
                    <button class="tb"><svg class="i"><use href="#align"/></svg>对齐<i class="arr"></i></button>
                    <button class="tb"><svg class="i"><use href="#offset"/></svg>偏移</button>
                    <button class="tb"><svg class="i"><use href="#stretch"/></svg>拉伸</button>
                    <span class="sep"></span>
                    <button class="tb" disabled><svg class="i"><use href="#split"/></svg>设置夹点</button>
                </div>
            </div>
            <div class="tool-row">
                <div class="bar bar-comp">
                    <span class="grip"></span>
                    <label class="combo c-s"><select aria-label="楼层"><option>基础层</option></select><i class="arr"></i></label>
                    <label class="combo"><select aria-label="构件类别"><option>墙</option></select><i class="arr"></i></label>
                    <label class="combo"><select aria-label="构件类型"><option>砌体墙</option></select><i class="arr"></i></label>
                    <label class="combo"><select aria-label="构件"><option>QTQ-3</option></select><i class="arr"></i></label>
                    <span class="sep"></span>
                    <button class="tb on"><svg class="i"><use href="#props"/></svg>属性</button>
                    <button class="tb on"><svg class="i"><use href="#editbar"/></svg>编辑钢筋</button>
                    <button class="tb"><svg class="i"><use href="#list"/></svg>构件列表</button>
                    <button class="tb"><svg class="i"><use href="#picker"/></svg>拾取构件</button>
                </div>
                <div class="bar bar-axis">
                    <span class="grip"></span>
                    <button class="tb" aria-label="辅轴"><svg class="i"><use href="#axis"/></svg></button>
                    <button class="tb push">删除辅轴</button>
                    <button class="tb"><svg class="i"><use href="#arcdim"/></svg>弧长标注<i class="arr wide"></i></button>
                </div>
            </div>
            <div class="tool-row">
                <div class="bar">
                    <span class="grip"></span>
                    <button class="tb on"><svg class="i"><use href="#cursor"/></svg>选择</button>
                    <button class="tb lone" aria-label="更多选择"><i class="arr"></i></button>
                    <span class="sep"></span>
                    <button class="tb"><svg class="i"><use href="#line"/></svg>直线</button>
                    <button class="tb"><svg class="i"><use href="#ptlen"/></svg>点加长度</button>
                    <button class="tb"><svg class="i"><use href="#arc"/></svg>三点画弧<i class="arr wide"></i></button>
                    <label class="combo c-xs"><select aria-label="半径"><option></option></select><i class="arr"></i></label>
                    <button class="tb"><svg class="i"><use href="#rect"/></svg>矩形</button>
                    <span class="sep"></span>
                    <button class="tb"><svg class="i"><use href="#smart"/></svg>智能布置<i class="arr"></i></button>
                    <span class="sep"></span>
                    <button class="tb"><svg class="i"><use href="#wallprop"/></svg>修改墙段属性</button>
                    <button class="tb"><svg class="i"><use href="#elev"/></svg>查改标高</button>
                </div>
            </div>

            <!-- 绘图区 -->
            <svg class="canvas">
                <g shape-rendering="crispEdges">
                    <path d="M79 0L66 30 315 144 382 0z" fill="#e6e600"/>
                    <path d="M66 30l4 5 247 113-2-4z" fill="#b3b300"/>
                    <path d="M315 144l2 4L386 0h-6z" fill="#999900"/>
                    <path d="M337 0h5l-59 131-3-4z" fill="#999900"/>
                    <path d="M135 0l-19 43 121 54L282 0z" fill="#0073e6"/>
                    <path d="M116 43l10 13 120 54-9-13z" fill="#0059b3"/>
                    <path d="M237 97l9 13L298 0h-16z" fill="#004d99"/>
                    <path d="M0 9l642 296M204 97l-3 5" stroke="#f00" fill="none"/>
                    <circle cx="13" cy="15" r="12" fill="none" stroke="#008000"/>
                </g>
                <text x="5" y="20" class="axis-no">A1</text>
                <path d="M0 9l26 12" stroke="#f00"/>
                <path d="M55 253l17-34" stroke="#0f0" stroke-width="4"/><path d="M76 210l0 13-9-4z" fill="#0f0"/>
                <path d="M56 256l34 14" stroke="#f00" stroke-width="4"/><path d="M100 276l-9-9-4 8z" fill="#f00"/>
                <circle cx="53" cy="253" r="4" fill="#0080ff"/>
                <path d="M80 219l5 5 4-5M85 224v4" stroke="#0f0" fill="none"/>
                <path d="M95 253l9 9M104 253l-9 9" stroke="#f00"/>
                <path d="M40 243h9l-9 9h9" stroke="#0080ff" fill="none"/>
            </svg>

            <div class="tool-row snap-row">
                <div class="bar">
                    <span class="grip"></span>
                    <button class="tb"><svg class="i"><use href="#ortho"/></svg>正交</button>
                    <button class="tb on"><svg class="i"><use href="#osnap"/></svg>对象捕捉</button>
                    <button class="tb"><svg class="i"><use href="#dyn"/></svg>动态输入</button>
                </div>
                <div class="bar">
                    <span class="grip"></span>
                    <button class="tb"><svg class="i"><use href="#cross"/></svg>交点</button>
                    <button class="tb on"><svg class="i"><use href="#perp"/></svg>垂点</button>
                    <button class="tb on"><svg class="i"><use href="#mid"/></svg>中点</button>
                    <button class="tb"><svg class="i"><use href="#vertex"/></svg>顶点</button>
                    <button class="tb"><svg class="i"><use href="#coord"/></svg>坐标</button>
                </div>
                <div class="bar grow">
                    <span class="grip"></span>
                    <label class="combo c-s"><select aria-label="偏移方式"><option>不偏移</option></select><i class="arr"></i></label>
                    <span class="sep"></span>
                    <label class="spin">X= <input type="text" value="0" disabled><span><i class="arr flip"></i><i class="arr"></i></span></label>
                    <span class="dim">mm&nbsp; Y=</span>
                </div>
            </div>

            <!-- 钢筋编辑 -->
            <section class="rebar">
                <div class="rebar-grip"><button aria-label="关闭钢筋编辑"><svg viewBox="0 0 10 10"><rect width="10" height="10" fill="#f6dede" stroke="#222" stroke-width="2"/><path d="M2 2l6 6M8 2L2 8" stroke="#222" stroke-width="1.500"/></svg></button></div>
                <div class="rebar-main">
                    <div class="bar">
                        <button class="tb nav" disabled aria-label="首行"><svg class="i"><use href="#first"/></svg></button>
                        <button class="tb nav" disabled aria-label="上一行"><svg class="i"><use href="#prev"/></svg></button>
                        <button class="tb nav" disabled aria-label="下一行"><svg class="i"><use href="#next"/></svg></button>
                        <button class="tb nav" disabled aria-label="末行"><svg class="i"><use href="#last"/></svg></button>
                        <span class="sep"></span>
                        <button class="tb nav" disabled aria-label="上移"><svg class="i"><use href="#up"/></svg></button>
                        <button class="tb nav" disabled aria-label="下移"><svg class="i"><use href="#down"/></svg></button>
                        <span class="sep"></span>
                        <button class="tb" disabled><svg class="i"><use href="#ins"/></svg>插入</button>
                        <button class="tb" disabled><svg class="i"><use href="#del"/></svg>删除</button>
                        <button class="tb" disabled><svg class="i"><use href="#scale"/></svg>缩尺配筋</button>
                        <button class="tb" disabled><svg class="i"><use href="#info"/></svg>钢筋信息</button>
                        <button class="tb"><svg class="i"><use href="#lib"/></svg>钢筋图库</button>
                        <button class="tb"><svg class="i"><use href="#other"/></svg>其他<i class="arr"></i></button>
                        <button class="tb close">关闭</button>
                        <span class="sep"></span>
                        <button class="tb">单构件钢筋总重</button>
                    </div>
                    <div class="grid-box">
                        <div class="grid-clip">
                            <table class="grid">
                                <colgroup><col class="w32"><col class="w73"><col class="w56"><col class="w36"><col class="w33"><col class="w201"><col class="w166"><col class="w292"><col class="w51"><col class="w61"><col class="w61"><col class="w71"><col class="w73"></colgroup>
                                <thead><tr><th></th><th>筋号</th><th class="cur">直径<em>(mm)</em></th><th>级别</th><th>图号</th><th>图形</th><th>计算公式</th><th></th><th>损耗<em>(%)</em></th><th>单重<em>(kg)</em></th><th>总重<em>(kg)</em></th><th>钢筋归类</th><th>搭接形式</th></tr></thead>
                                <tbody><tr><th class="cur"><em>1*</em></th><td></td><td class="cell-on"></td><td></td><td></td><td></td><td></td><td></td><td></td><td></td><td></td><td></td><td></td></tr></tbody>
                            </table>
                        </div>
                        <div class="hscroll wide">
                            <svg viewBox="0 0 16 16"><path d="M9.500 4.500L6 8l3.500 3.500" fill="none" stroke="#444" stroke-width="2"/></svg>
                            <div class="track"><span class="thumb"></span></div>
                            <svg viewBox="0 0 16 16"><path d="M6.500 4.500L10 8l-3.500 3.500" fill="none" stroke="#444" stroke-width="2"/></svg>
                        </div>
                    </div>
                </div>
            </section>
        </main>
    </div>

    <!-- 属性编辑器 -->
    <section class="dialog">
        <div class="dialog-title"><h2>属性编辑器</h2><button aria-label="关闭属性编辑器">x</button></div>
        <table class="grid props">
            <colgroup><col class="w21"><col class="w121"><col class="w134"></colgroup>
            <thead><tr><th></th><th>属性名称</th><th class="cur">属性值</th></tr></thead>
            <tbody>
                <tr class="active"><th class="cur"><em>1</em></th><td>名称</td><td><em>QTQ-5</em></td></tr>
                <tr><th><em>2</em></th><td>厚度<em>(mm)</em></td><td><em>240</em></td></tr>
                <tr><th><em>3</em></th><td>轴线距左墙皮距离</td><td><em>(120)</em></td></tr>
                <tr class="link"><th><em>4</em></th><td>砌体通长筋</td><td><em>2</em><svg class="rebar-sign" viewBox="0 0 14 12"><path d="M3.500 4.500h7v4h-7zM5.500 1v9M8.500 1v9M3 10.500h8" fill="none" stroke="#000"/></svg><em>8@500</em></td></tr>
                <tr class="link"><th><em>5</em></th><td>横向短筋</td><td></td></tr>
                <tr><th><em>6</em></th><td>砌体墙类型</td><td>承重墙</td></tr>
                <tr><th><em>7</em></th><td>备注</td><td></td></tr>
                <tr class="group"><th><em>8</em></th><td><button aria-label="折叠">−</button>其它属性</td><td></td></tr>
                <tr class="sub"><th><em>9</em></th><td>汇总信息</td><td>砌体通长拉结筋</td></tr>
                <tr class="sub"><th><em>10</em></th><td>钢筋搭接</td><td><em>(56)</em></td></tr>
                <tr class="sub"><th><em>11</em></th><td>计算设置</td><td>按默认计算设置计算</td></tr>
                <tr class="sub"><th><em>12</em></th><td>搭接设置</td><td>按默认搭接设置计算</td></tr>
                <tr class="sub"><th><em>13</em></th><td>起点顶标高<em>(m)</em></td><td>层底标高<em>+0.9(-1.3)</em></td></tr>
                <tr class="sub"><th><em>14</em></th><td>终点顶标高<em>(m)</em></td><td>层底标高<em>+0.9(-1.3)</em></td></tr>
                <tr class="sub"><th><em>15</em></th><td>起点底标高<em>(m)</em></td><td>基础底标高<em>+0.54(-1.66</em></td></tr>
                <tr class="sub end"><th><em>16</em></th><td>终点底标高<em>(m)</em></td><td>基础底标高<em>+0.54(-1.66</em></td></tr>
                <tr class="group"><th><em>17</em></th><td><button aria-label="展开">+</button>显示样式</td><td></td></tr>
            </tbody>
        </table>
    </section>

    <!-- 状态栏 -->
    <footer class="status">
        <span class="s148"><em>X=231438 Y=2420</em></span>
        <span class="s78">层高<em>:2.15m</em></span>
        <span class="s98">底标高<em>:-2.2m</em></span>
        <span class="s48"><em>1(1)</em></span>
        <span class="grow">按鼠标左键指定第一个角点，或拾取构件图元</span>
        <span class="s70"><em>932 FPS</em></span>
    </footer>

    <!-- 任务栏 -->
    <div class="taskbar">
        <button class="start" aria-label="开始"><svg width="16" height="16" viewBox="0 0 16 16"><path d="M0 2.500L6.500 1.500V7.500H0zM7.500 1.300L16 0v7.500H7.500zM0 8.500h6.500v6L0 13.500zM7.500 8.500H16V16l-8.500-1.300z" fill="#fff"/></svg></button>
        <label class="search">
            <svg width="22" height="22" viewBox="0 0 22 22"><circle cx="11" cy="11" r="9" fill="none" stroke="#fff" stroke-width="2.500"/></svg>
            <input type="text" placeholder="在这里输入你要搜索的内容">
            <svg width="14" height="18" viewBox="0 0 14 18"><rect x="4.500" y="1" width="5" height="10" rx="1" fill="none" stroke="#bbb"/><path d="M1.500 8v5h11V8M7 13v4M4 17h6" fill="none" stroke="#bbb"/></svg>
        </label>
        <div class="tasks">
            <button aria-label="任务视图"><svg viewBox="0 0 24 24"><path d="M6.500 5.500h11v13h-11zM4 7.500H1.500v9H4M20 7.500h2.500v9H20" fill="none" stroke="#fff" stroke-width="1.300"/></svg></button>
            <button aria-label="应用"><svg viewBox="0 0 24 24"><g fill="#eee" stroke="#061215"><path d="M12.500 12Q2 13 1.500 7.500 2 2 7 1.500q6 0 5.500 10.500z"/><path d="M12.500 12Q11 2 17 1.500q5 .5 5.500 5.500 0 5-10 5z"/><path d="M11.500 12q11-1 11 4.500-.5 5.500-5.500 6-6 0-5.500-10.500z"/><path d="M11.500 12q1.500 10-4.500 10.500-5-.5-5.500-5.500 0-5 10-5z"/></g></svg></button>
            <button class="c-white" aria-label="浏览器"><svg><use href="#ie"/></svg></button>
            <button aria-label="应用"><svg viewBox="0 0 24 24"><path d="M21 4q-4 1-8 0-9-1-10 8 1 9 9 9 7-1 8-7-1-5-5-5-5 0-5 4 1 4 5 3" fill="none" stroke="#ddd" stroke-width="1.600"/></svg></button>
            <button aria-label="Edge"><svg><use href="#edge"/></svg></button>
            <button class="c-ie" aria-label="IE"><svg><use href="#ie"/></svg></button>
            <button aria-label="文件资源管理器"><svg viewBox="0 0 24 24"><path d="M2 3h8l1 2h11v16H2z" fill="#f8d775"/><path d="M2 7h20v14H2z" fill="#ffe9a2"/><path d="M6 21v-7h12v7h-3v-4H9v4z" fill="#3fa0dc"/></svg></button>
            <button class="run" aria-label="广联达"><svg viewBox="0 0 24 24"><path d="M22 1q-4 2-9 1Q2 3 1.500 12.500 2 22 11 23q10 0 10.500-11H12l4 3q-1 3-4 3-5-.5-5-6 1-6 7-6 5 0 8-5z" fill="#1ea0ee"/></svg></button>
            <button class="run cur" aria-label="GGJ2013"><svg><use href="#app"/></svg></button>
            <button class="run" aria-label="文档"><svg viewBox="0 0 24 24"><rect x="1" y="1" width="22" height="22" rx="2" fill="#f39a1e"/><path d="M4 4h15v16H4z" fill="#fff6e0"/><path d="M6 8h8M6 11h6M6 14h5" stroke="#b66a16"/><path d="M9 18L20 4l2 2-11 13z" fill="#d9661a" stroke="#fff" stroke-width=".6"/></svg></button>
            <button class="run c-green" aria-label="360浏览器"><svg><use href="#ie"/></svg></button>
        </div>
        <div class="tray">
            <span>链接</span>
            <svg viewBox="0 0 16 16"><path d="M2 11l6-6 6 6" fill="none" stroke="#fff" stroke-width="1.300"/></svg>
            <svg viewBox="0 0 16 16"><path d="M4.500 6.500h10v6h-10zM15.500 8v3" fill="none" stroke="#fff"/><path d="M7 8h6v3H7zM0 3h5v3H0z" fill="#fff"/><path d="M2.500 6v4h2M1 1v2M4 1v2" stroke="#fff" fill="none"/></svg>
            <svg viewBox="0 0 16 16"><g fill="none" stroke="#ccc"><path d="M2 14Q3 4 14 3"/><path d="M5 14q1-7 9-8"/><path d="M8 14q1-4 6-5"/></g><circle cx="12.500" cy="13" r="1.500" fill="#fff"/></svg>
            <svg viewBox="0 0 16 16"><path d="M1 6h2l3-3v10l-3-3H1z" fill="none" stroke="#fff"/><path d="M8 6q1.500 2 0 4M10 4q3 4 0 8M12 2q5 6 0 12" fill="none" stroke="#fff"/></svg>
            <svg class="kb" viewBox="0 0 22 14"><rect x=".5" y=".5" width="21" height="12" fill="none" stroke="#fff"/><path d="M3 3.500h16M3 6.500h16" stroke="#fff" stroke-dasharray="1 1"/><path d="M5 9.500h12" stroke="#fff"/></svg>
            <span>中</span>
            <svg><use href="#sogou"/></svg>
        </div>
        <div class="clock"><span>21:40</span><span>2018/4/19</span></div>
        <button class="notice" aria-label="通知"><svg width="24" height="26" viewBox="0 0 24 26"><path d="M1 2h16v13H9l-3 4v-4H1z" fill="#fff"/><path d="M4 5.500h10M4 8.500h10M4 11.500h6" stroke="#111"/><circle cx="15" cy="17" r="7.500" fill="#222" stroke="#888"/></svg><b>1</b></button>
    </div>
</body>
</html>
```
FILE: styles.css
```css
:root {
    --face: #f0f0f0;
    --line: #c0c0c0;
    --accent: #0078d7;
    --accent-bg: #dfebf7;
    --header: #ffd18a;
    --maroon: #5c0050;
}

* {
    margin: 0;
    padding: 0;
    box-sizing: border-box;
}

body {
    display: flex;
    flex-direction: column;
    height: 100vh;
    overflow: hidden;
    position: relative;
    background: var(--face);
    color: #000;
    font: 12px/16px "Open Sans", "Noto Sans CJK SC", sans-serif;
    white-space: nowrap;
}

button, input, select {
    font: inherit;
    color: inherit;
    background: none;
    border: none;
    border-radius: 0;
}

a {
    color: inherit;
    text-decoration: none;
}

/* 等宽数字和字母 */
em {
    font: 10px/16px "DejaVu Sans Mono", monospace;
}

.sprite {
    position: absolute;
    width: 0;
    height: 0;
}

.i {
    width: 16px;
    height: 16px;
    flex: none;
}

.grow {
    flex: 1;
    min-width: 0;
}

/* 标题栏 */
.title-bar {
    display: flex;
    align-items: center;
    height: 23px;
    flex: none;
    background: #fff;
    padding-left: 2px;
    gap: 5px;
}

.title-bar h1 {
    flex: 1;
    font-family: Inter, "Noto Sans CJK SC", sans-serif;
    font-size: 12px;
    font-weight: normal;
}

.win-btns {
    padding-right: 2px;
}

.win-btns button {
    width: 46px;
    height: 20px;
}

.ime-bar {
    position: absolute;
    left: 727px;
    top: 3px;
    width: 181px;
    height: 24px;
    display: flex;
    align-items: center;
    gap: 6px;
    padding-left: 7px;
    background: #fff;
    border: 1px solid #aebfd2;
    color: #1f77c9;
}

.ime-bar svg {
    width: 16px;
    height: 16px;
}

.ime-bar b {
    width: 16px;
    font-size: 15px;
}

.ime-bar .ime-logo {
    position: absolute;
    left: -26px;
    top: -4px;
    width: 27px;
    height: 27px;
}

.speed-ball {
    position: absolute;
    left: 1077px;
    top: -27px;
    width: 46px;
    height: 46px;
    border-radius: 50%;
    background: #3fc05a;
    border: 2px solid #e4f3e6;
    box-shadow: 0 1px 4px 1px #777;
    color: #fff;
    font: bold 12px/63px "Open Sans", sans-serif;
    text-align: center;
}

/* 菜单和工具栏 */
.menu-row {
    display: flex;
    height: 30px;
    flex: none;
    padding-top: 1px;
}

.menu {
    display: flex;
    align-items: center;
    gap: 11px;
    padding: 0 6px 0 7px;
}

.menu a:nth-child(n+9) {
    padding-left: 1px;
}

.menu-row .tb {
    align-self: center;
}

.tool-row {
    display: flex;
    height: 28px;
    flex: none;
    padding-bottom: 2px;
}

.main-tools {
    height: 30px;
    gap: 3px;
    padding-bottom: 1px;
}

.bar {
    display: flex;
    align-items: center;
    background: linear-gradient(#fdfdfd, #f3f3f3 70%, #eeeeee);
    border-radius: 2px;
}

.tip {
    width: 188px;
    justify-content: center;
    color: #6b3300;
    margin: 0 2px;
}

.bar-file {
    width: 148px;
    padding-left: 1px;
}

.bar-calc {
    width: 550px;
    padding-left: 2px;
}

.bar-comp {
    padding-right: 2px;
}

.bar-axis {
    width: 422px;
    margin-left: 74px;
}

.bar-axis .push {
    margin-left: auto;
}

.tb {
    display: flex;
    align-items: center;
    gap: 4px;
    height: 26px;
    flex: none;
    border: 1px solid transparent;
    padding: 0 2px 0 3px;
}

.tb:hover:enabled,
.tb.on {
    background: var(--accent-bg);
    border-color: var(--accent);
}

.tb:disabled {
    color: #8a8a8a;
}

.tb.drop {
    background: #fff;
    padding-left: 1px;
}

.tb.lone {
    padding-right: 0;
}

.tb.close {
    padding-left: 5px;
}

.arr {
    width: 7px;
    height: 4px;
    margin-left: -2px;
    background: #000;
    clip-path: polygon(0 0, 100% 0, 50% 100%);
}

.arr.wide {
    margin-left: 2px;
}

.arr.flip {
    transform: rotate(180deg);
}

.sep {
    width: 1px;
    height: 16px;
    margin: 0 2px 0 3px;
    background: #aaa;
    flex: none;
}

.grip {
    width: 2px;
    height: 16px;
    margin-left: 5px;
    flex: none;
    background: repeating-linear-gradient(#b4b4b4 0 2px, transparent 2px 4px);
}

.more {
    margin: 0 3px 12px auto;
    font-size: 15px;
    font-weight: bold;
}

.bar.grow .more {
    margin-right: 7px;
}

.combo {
    position: relative;
    width: 70px;
    height: 22px;
    margin-left: 2px;
    flex: none;
    background: linear-gradient(90deg, #fff 0 58px, #f6f6f6 58px);
}

.combo.c-s {
    width: 58px;
    background: linear-gradient(90deg, #fff 0 46px, #f6f6f6 46px);
}

.combo.c-xs {
    width: 56px;
    margin-left: 0;
    background: linear-gradient(90deg, #fff 0 44px, #f6f6f6 44px);
}

.combo select {
    width: 100%;
    height: 22px;
    padding-left: 2px;
    appearance: none;
}

.combo .arr {
    position: absolute;
    right: 3px;
    top: 10px;
    pointer-events: none;
}

/* 主体 */
.workspace {
    display: flex;
    flex: 1;
    min-height: 0;
    gap: 4px;
}

.sidebar {
    display: flex;
    flex-direction: column;
    width: 166px;
    flex: none;
    padding-bottom: 1px;
}

.side-title {
    display: flex;
    align-items: center;
    height: 15px;
    margin: 1px 0 2px;
    background: #0053e1;
    color: #fff;
    gap: 2px;
    flex: none;
}

.side-title span {
    flex: 1;
}

.side-btn {
    height: 22px;
    margin-right: 1px;
    border: 1px solid #a5a5a5;
    border-left-color: #fff;
    box-shadow: inset 1px 1px #fff;
    flex: none;
}

.side-tools {
    height: 27px;
    flex: none;
    padding: 5px 6px;
    background: linear-gradient(#fafafa, #efefef);
}

.tree-box {
    display: flex;
    flex-direction: column;
    flex: 1;
    min-height: 0;
    margin: 0 1px 0 2px;
    padding: 1px 2px 1px 0;
    border: 1px solid #828790;
    background: #fff;
}

.tree-body {
    display: flex;
    flex: 1;
    min-height: 0;
    overflow: hidden;
}

.tree {
    flex: 1;
    overflow: hidden;
    padding-left: 23px;
    list-style: none;
}

.tree ul {
    list-style: none;
    margin-left: -11px;
    padding-left: 19px;
    border-left: 1px dotted #888;
    position: relative;
}

.tree li {
    position: relative;
    line-height: 16px;
}

.node, .tree ul li {
    display: flex;
    height: 16px;
    gap: 5px;
}

.tree ul li {
    padding-left: 10px;
    gap: 3px;
}

.tree ul span {
    padding: 0 2px;
}

.tree ul li::before {
    content: "";
    position: absolute;
    left: 0;
    top: 0;
    width: 10px;
    height: 8px;
    border-left: 1px dotted #888;
    border-bottom: 1px dotted #888;
}

.tree ul li:not(:last-child)::after {
    content: "";
    position: absolute;
    left: 0;
    top: 8px;
    height: 8px;
    border-left: 1px dotted #888;
}

.tree > li::before {
    content: "";
    position: absolute;
    left: -16px;
    top: 5px;
    width: 5px;
    height: 5px;
    border: solid #999;
    border-width: 1px 1px 0 0;
    transform: rotate(45deg);
}

.tree > li.open::before {
    top: 4px;
    left: -15px;
    border-color: #333;
    border-width: 2px 2px 0 0;
    transform: rotate(135deg);
}

.tree .selected span {
    background: #d9d9d9;
}

.vscroll {
    display: flex;
    flex-direction: column;
    width: 16px;
    background: #f0f0f0;
}

.vscroll svg, .hscroll svg {
    width: 16px;
    height: 16px;
    flex: none;
}

.vscroll .thumb {
    height: 359px;
    margin-bottom: auto;
}

.thumb {
    background: #cdcdcd;
}

.hscroll {
    display: flex;
    height: 18px;
    padding: 0 16px 0 1px;
    align-items: center;
    flex: none;
    background: #f0f0f0;
}

.hscroll .thumb {
    width: 102px;
    height: 15px;
    margin-right: auto;
}

.content {
    display: flex;
    flex-direction: column;
    flex: 1;
    min-width: 0;
    padding-top: 1px;
}

.canvas {
    display: block;
    width: 100%;
    flex: 1;
    min-height: 0;
    background: #000;
}

.axis-no {
    fill: #fff;
    font: bold 13px "DejaVu Sans Mono", monospace;
}

.snap-row {
    height: 33px;
    padding: 1px 0 4px;
    gap: 3px;
}

.snap-row .tb {
    height: 24px;
}

.spin {
    display: flex;
    align-items: center;
    gap: 4px;
    color: #777;
    position: relative;
}

.spin input {
    width: 58px;
    height: 24px;
    padding-right: 18px;
    border: 1px solid #7a7a7a;
    text-align: right;
}

.spin span {
    position: absolute;
    right: 5px;
    display: flex;
    flex-direction: column;
    gap: 7px;
}

.spin .arr {
    background: #666;
    margin: 0;
}

.dim {
    color: #777;
    margin-left: 2px;
}

/* 钢筋表 */
.rebar {
    display: flex;
    height: 200px;
    flex: none;
}

.rebar-grip {
    width: 13px;
    padding: 1px 0 0 1px;
    line-height: 0;
    background: radial-gradient(circle at 2px 2px, #bbb 1px, transparent 2px) 1px 14px / 5px 5px;
}

.rebar-grip button {
    width: 11px;
    height: 11px;
    background: var(--face);
}

.rebar-grip svg {
    width: 10px;
    height: 10px;
}

.rebar-main {
    display: flex;
    flex-direction: column;
    flex: 1;
    min-width: 0;
    padding-top: 1px;
}

.rebar .nav {
    width: 23px;
    padding-left: 1px;
}

.grid-box {
    display: flex;
    flex-direction: column;
    flex: 1;
    min-height: 0;
    border: 1px solid #a0a0a0;
    border-top-color: #888;
    background: #fff;
    margin-right: 1px;
}

.grid-clip {
    flex: 1;
    overflow: hidden;
}

.grid {
    table-layout: fixed;
    width: 0;
    border-collapse: collapse;
}

.grid th, .grid td {
    height: 19px;
    border: 1px solid var(--line);
    border-width: 0 1px 1px 0;
    font-weight: normal;
    line-height: 16px;
    overflow: hidden;
}

.grid th {
    background: linear-gradient(#fff, #f0f0f0);
    text-align: center;
}

.grid thead th {
    height: 20px;
}

.grid .cur {
    background: var(--header);
    color: var(--maroon);
}

.grid thead .cur {
    background: linear-gradient(#f9d9a0, #f1bf5c);
}

.grid .cell-on {
    background: #d9eaf8;
    box-shadow: inset 1px 0 #000;
}

.w21 { width: 21px; }
.w32 { width: 32px; }
.w33 { width: 33px; }
.w36 { width: 36px; }
.w51 { width: 51px; }
.w56 { width: 56px; }
.w61 { width: 61px; }
.w71 { width: 71px; }
.w73 { width: 73px; }
.w121 { width: 121px; }
.w134 { width: 134px; }
.w166 { width: 166px; }
.w201 { width: 201px; }
.w292 { width: 292px; }

.hscroll.wide {
    padding: 0;
    margin-bottom: 1px;
}

.track {
    flex: 1;
    display: flex;
}

.track .thumb {
    width: 72%;
}

/* 属性编辑器 */
.dialog {
    position: absolute;
    left: 832px;
    top: 96px;
    width: 281px;
    height: 494px;
    background: #fff;
    border: 1px solid #b0b0b4;
    border-top: none;
    box-shadow: 0 2px 10px rgba(0, 0, 0, 0.45);
}

.dialog-title {
    display: flex;
    justify-content: space-between;
    align-items: center;
    height: 31px;
    padding-left: 7px;
    border-bottom: 1px solid #a4a4aa;
    color: #999;
}

.dialog-title h2 {
    font-size: 12px;
    font-weight: normal;
}

.dialog-title button {
    width: 19px;
    height: 19px;
    background: #e4e4e4;
    color: #fff;
    line-height: 14px;
}

.props thead th {
    height: 24px;
}

.props td {
    position: relative;
    padding-left: 2px;
}

.props td:nth-child(2) {
    padding-left: 20px;
}

.props .sub td:nth-child(2) {
    padding-left: 29px;
}

.props .active td:nth-child(2) {
    background: var(--accent);
    color: #fff;
}

.props .active td:nth-child(3) {
    background: #d9eaf8;
}

.props .link td:nth-child(2) {
    color: #0000e6;
}

.props .group td {
    color: #808080;
}

.props .group button {
    position: absolute;
    left: 3px;
    top: 3px;
    width: 12px;
    height: 12px;
    border: 1px solid #aaa;
    color: #000;
    line-height: 9px;
}

.props .sub td:nth-child(2)::before {
    content: "";
    position: absolute;
    left: 8px;
    top: 0;
    width: 17px;
    height: 9px;
    border: solid #bbb;
    border-width: 0 0 1px 1px;
}

.props .sub:not(.end) td:nth-child(2)::after {
    content: "";
    position: absolute;
    left: 8px;
    top: 9px;
    height: 10px;
    border-left: 1px solid #bbb;
}

.rebar-sign {
    width: 14px;
    height: 12px;
    vertical-align: -2px;
}

/* 状态栏 */
.status {
    display: flex;
    gap: 2px;
    height: 22px;
    flex: none;
    padding-top: 2px;
    background: #fff;
}

.status span {
    padding: 0 1px;
    line-height: 18px;
    border: 1px solid #d7d7d7;
    background: linear-gradient(#fff, #f0f0f0);
}

.s148 { width: 148px; }
.s78 { width: 78px; }
.s98 { width: 98px; }
.s48 { width: 48px; }
.s70 { width: 70px; }

/* 任务栏 */
.taskbar {
    display: flex;
    height: 40px;
    flex: none;
    background: #020d10;
    color: #fff;
}

.start {
    width: 48px;
    background: #000;
    line-height: 0;
}

.search {
    display: flex;
    align-items: center;
    width: 343px;
    padding: 0 13px 0 9px;
    gap: 5px;
    background: #333;
    font-size: 14px;
}

.search input {
    flex: 1;
    min-width: 0;
}

.search input::placeholder {
    color: #9a9a9a;
}

.tasks {
    display: flex;
    gap: 2px;
    flex: 1;
    padding-left: 2px;
}

.tasks button {
    width: 48px;
    border-bottom: 3px solid transparent;
    line-height: 0;
}

.tasks svg {
    width: 24px;
    height: 24px;
}

.tasks .run {
    border-bottom-color: #76b9ed;
}

.tasks .cur {
    background: #34474d;
}

.c-white { color: #eee; }
.c-ie { color: #4db2f0; --ring: #f6c62c; }
.c-green { color: #5fcb3a; }

.tray {
    display: flex;
    align-items: center;
    gap: 9px;
}

.tray svg {
    width: 16px;
    height: 16px;
}

.tray .kb {
    width: 22px;
    height: 14px;
}

.clock {
    display: flex;
    flex-direction: column;
    justify-content: center;
    align-items: center;
    width: 92px;
    line-height: 18px;
}

.notice {
    position: relative;
    width: 44px;
    padding-right: 10px;
    background: #000;
    line-height: 0;
}

.notice b {
    position: absolute;
    left: 17px;
    top: 16px;
    font: 11px/16px "Open Sans", sans-serif;
}
```
